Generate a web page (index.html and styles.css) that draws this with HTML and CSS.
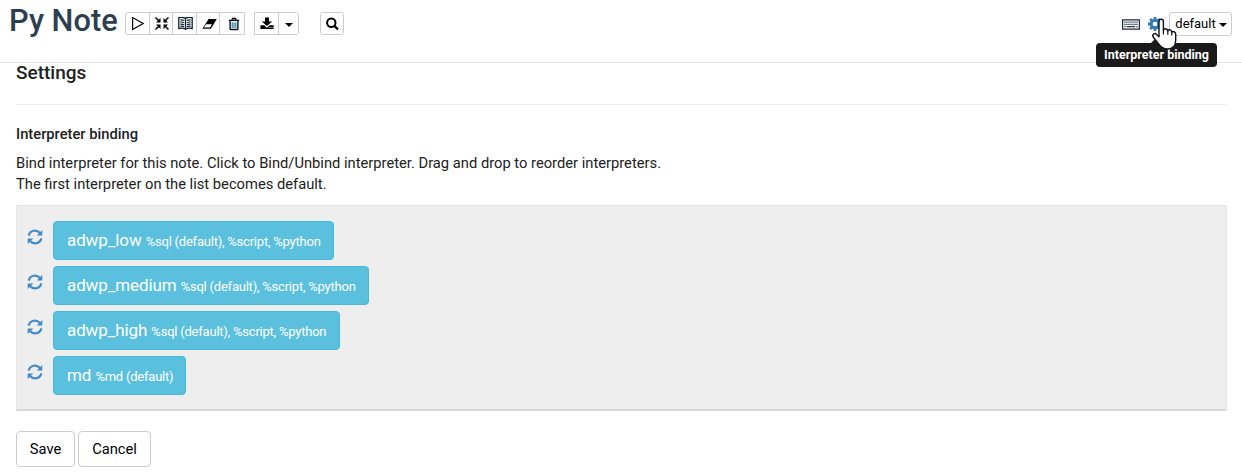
FILE: index.html
```html
<!DOCTYPE html>
<html lang="en">
<head>
<meta charset="utf-8">
<title>Py Note</title>
<link rel="stylesheet" href="styles.css">
</head>
<body>
<svg class="defs" width="0" height="0">
  <symbol id="refresh" viewBox="0 0 16 16">
    <path d="M1.6 6.6C3.2 1 9.5.2 13 4.1M14.4 9.4C12.8 15 6.5 15.8 3 11.9" fill="none" stroke="currentColor" stroke-width="2.2"/>
    <path d="M15.3 1v5.6H9.7zM.7 15V9.4h5.6z" fill="currentColor"/>
  </symbol>
</svg>
<header class="header">
  <h1 class="title">Py Note</h1>
  <div class="group main">
    <button class="tool" aria-label="Run"><svg width="14" height="14" viewBox="0 0 14 14"><path d="M1.6 .6v11.9L12.2 6.5z" fill="none" stroke="#000" stroke-width="1.2"/></svg></button>
    <button class="tool" aria-label="Collapse"><svg width="14" height="14" viewBox="0 0 14 14"><g fill="none" stroke="#000" stroke-width="1.5"><path d="M.5 .5l3.8 3.8M13.5 .5L9.7 4.3M.5 12.5l3.8-3.8M13.5 12.5L9.7 8.7"/></g><path d="M5.5 1v4.5H1zM8.5 1v4.5H13zM1 7.5h4.5V12zM13 7.5H8.5V12z"/></svg></button>
    <button class="tool" aria-label="Output"><svg width="15" height="14" viewBox="0 0 15 14"><path d="M.8 .6Q4.7-.2 7.5 1.4 10.3-.2 14.2 .6v10.9Q10.3 10.6 7.5 12.3 4.7 10.6 .8 11.5zM7.5 1.4v10.9" fill="none" stroke="#102033" stroke-width="1.3"/><path d="M2.3 3q2-.3 3.8.6M2.3 5.1q2-.3 3.8.6M2.3 7.2q2-.3 3.8.6M2.3 9.2q2-.3 3.8.6M12.7 3q-2-.3-3.8.6M12.7 5.1q-2-.3-3.8.6M12.7 7.2q-2-.3-3.8.6M12.7 9.2q-2-.3-3.8.6" fill="none" stroke="#102033" stroke-width="1.1"/></svg></button>
    <button class="tool" aria-label="Clear"><svg width="15" height="14" viewBox="0 0 15 14"><path d="M6.6 2h8.2L8.9 11.7H.4z"/><path d="M4 7.3h6L8 10.6H2z" fill="#fff"/></svg></button>
    <button class="tool trash" aria-label="Remove"><svg width="12" height="14" viewBox="0 0 12 14"><path d="M.8 3.4h10.4M4 3.1l.5-1.6h3l.5 1.6M2.1 4v7.7q0 .8.8.8h6.2q.8 0 .8-.8V4" fill="none" stroke="#06131b" stroke-width="1.4"/><path d="M4.2 5.3V11M6 5.3V11M7.8 5.3V11" stroke="#126c8c" stroke-width="1"/></svg></button>
  </div>
  <div class="group export">
    <button class="tool" aria-label="Export"><svg width="14" height="14" viewBox="0 0 14 14"><path d="M5 .6h4v3.9h3.2L7 9.1 1.8 4.5H5zM.4 8.2h3.9L7 10.7l2.7-2.5h3.9V12H.4z"/><path d="M9.5 10.5h1M11.5 10.5h1" stroke="#fff"/></svg></button>
    <button class="tool narrow" aria-label="Export options"><i class="caret"></i></button>
  </div>
  <div class="group search">
    <button class="tool" aria-label="Search"><svg width="14" height="14" viewBox="0 0 14 14"><circle cx="6.3" cy="5.8" r="4.2" fill="none" stroke="#000" stroke-width="2"/><path d="M9.3 8.8l3.6 3.6" stroke="#000" stroke-width="2.3"/></svg></button>
  </div>
  <div class="actions">
    <svg width="18" height="11" viewBox="0 0 18 11"><path d="M.6 .9h16.8v9.2H.6z" fill="#fff" stroke="#1d2b38" stroke-width="1.3"/><path d="M2.3 3.2h13.5M2.3 5.3h13.5" stroke="#263746" stroke-width="1.3" stroke-dasharray="1.3 .7"/><path d="M2.3 7.7h1.3M4.7 7.7h8.4M14.3 7.7h1.3" stroke="#263746" stroke-width="1.2"/></svg>
    <svg class="gear" width="14" height="14" viewBox="0 0 14 14"><circle cx="7" cy="7" r="3.8" fill="none" stroke="#337ab7" stroke-width="3"/><path d="M7 0v3M7 11v3M0 7h3M11 7h3M2.1 2.1l2 2M9.9 9.9l2 2M2.1 11.9l2-2M9.9 4.1l2-2" stroke="#337ab7" stroke-width="2.8"/></svg>
    <button class="mode">default<i class="caret"></i></button>
  </div>
  <div class="tooltip">Interpreter binding</div>
  <svg class="cursor" width="27" height="33" viewBox="0 0 27 33"><path d="M8 3.4C8 .5 12.4.5 12.4 3.4V12.2C13 10 16.4 10.3 16.8 12.8 17.8 11 20.5 11.7 20.8 14.1 22.5 12.8 24.7 14 24.7 16.5V22C24.7 28 22 31 16.5 31 12.2 31 9.5 28.7 7.4 25.6L2.2 19C.6 16.4 3.8 14.5 5.6 16.4L8 18.8z" fill="#fff" stroke="#10101c" stroke-width="1.4" stroke-linejoin="round"/><path d="M12.4 12v4.5M16.8 12.8v4M20.8 14.1v3.5" stroke="#10101c" stroke-width="1.2"/></svg>
</header>
<main class="settings">
  <h2 class="heading">Settings</h2>
  <h3 class="subheading">Interpreter binding</h3>
  <p class="help">Bind interpreter for this note. Click to Bind/Unbind interpreter. Drag and drop to reorder interpreters.<br>The first interpreter on the list becomes default.</p>
  <div class="list">
    <div class="row"><svg class="refresh"><use href="#refresh"/></svg><div class="chip w1"><span class="name">adwp_low</span> <small>%sql (default), %script, %python</small></div></div>
    <div class="row"><svg class="refresh"><use href="#refresh"/></svg><div class="chip w2"><span class="name">adwp_medium</span> <small>%sql (default), %script, %python</small></div></div>
    <div class="row"><svg class="refresh"><use href="#refresh"/></svg><div class="chip w3"><span class="name">adwp_high</span> <small>%sql (default), %script, %python</small></div></div>
    <div class="row"><svg class="refresh"><use href="#refresh"/></svg><div class="chip w4"><span class="name">md</span> <small>%md (default)</small></div></div>
  </div>
  <div class="buttons"><button class="btn save">Save</button><button class="btn cancel">Cancel</button></div>
</main>
</body>
</html>
```
FILE: styles.css
```css
* { box-sizing: border-box; }
body { margin: 0; height: 473px; overflow: hidden; background: #fff; color: #212121; font-family: Roboto, sans-serif; }
.defs { position: absolute; }
button { font-family: inherit; color: #000; background: #fff; padding: 0; }
.header { position: relative; display: flex; height: 63px; padding: 0 10px 0 9px; border-bottom: 1px solid #e5e5e5; }
.title { flex: none; width: 116px; margin: 0; padding-top: 1px; font-size: 30.8px; line-height: 40px; font-weight: 500; color: #2c3e50; white-space: nowrap; }
.group { flex: none; display: flex; height: 23px; margin-top: 12px; border: 1px solid #ccc; border-radius: 3px; }
.main { width: 120px; border-radius: 3px 0 0 3px; }
.main .tool { padding-left: 2px; }
.main .trash { padding-left: 3px; }
.export { width: 45px; margin-left: 9px; border-radius: 0 3px 3px 0; }
.search { width: 24px; margin-left: 21px; }
.tool { display: flex; flex: 1; align-items: center; justify-content: center; min-width: 0; border: 0; border-radius: 3px; }
.tool + .tool { border-left: 1px solid #ccc; border-radius: 0; }
.tool.narrow { flex: 0 0 20px; }
.caret { width: 0; height: 0; margin-top: 2px; border: 4px solid transparent; border-top-color: #000; border-bottom: 0; }
.actions { display: flex; align-items: center; height: 24px; margin: 12px 0 0 auto; }
.gear { margin: 0 7px 0 8px; }
.mode { display: flex; align-items: center; justify-content: center; gap: 3px; width: 63px; height: 24px; padding: 0 0 1px 1px; border: 1px solid #ccc; border-radius: 3px; font-size: 13px; }
.tooltip { position: absolute; left: 1096px; top: 43px; width: 121px; height: 24px; border-radius: 4px; background: #1a1a1a; color: #fff; font-size: 12.5px; line-height: 24px; font-weight: 700; text-align: center; white-space: nowrap; }
.tooltip::before { content: ""; position: absolute; left: 55px; top: -5px; border: 5px solid transparent; border-top: 0; border-bottom-color: #1a1a1a; }
.cursor { position: absolute; left: 1151px; top: 18px; }
.settings { padding: 0 15px 0 16px; }
.heading { height: 42px; margin: 0; border-bottom: 1px solid #eee; font-size: 19px; line-height: 20px; font-weight: 500; }
.subheading { margin: 19px 0 9px; font-size: 14.73px; line-height: 20px; font-weight: 500; }
.help { margin: 0; font-size: 14.73px; line-height: 21px; white-space: nowrap; }
.list { display: flex; flex-direction: column; gap: 6px; height: 206px; margin-top: 10px; padding: 15px 10px; border: 1px solid #e5e5e5; border-bottom: 2px solid #d8d8d8; background: #eee; }
.row { display: flex; gap: 10px; height: 39px; }
.refresh { flex: none; width: 16px; height: 16px; margin-top: 8px; color: #428bca; }
.chip { padding: 0 13px; border: 1px solid #46b8da; border-radius: 4px; background: #5bc0de; color: #fff; font-size: 17px; line-height: 36px; letter-spacing: -.11px; white-space: nowrap; }
.chip small { font-size: 13px; letter-spacing: -.22px; }
.w1 { width: 281px; }
.w2 { width: 316px; }
.w3 { width: 287px; }
.w4 { width: 133px; }
.buttons { display: flex; gap: 3px; margin-top: 20px; }
.btn { height: 36px; border: 1px solid #ccc; border-radius: 4px; font-size: 14.7px; }
.save { width: 59px; }
.cancel { width: 73px; }
```
